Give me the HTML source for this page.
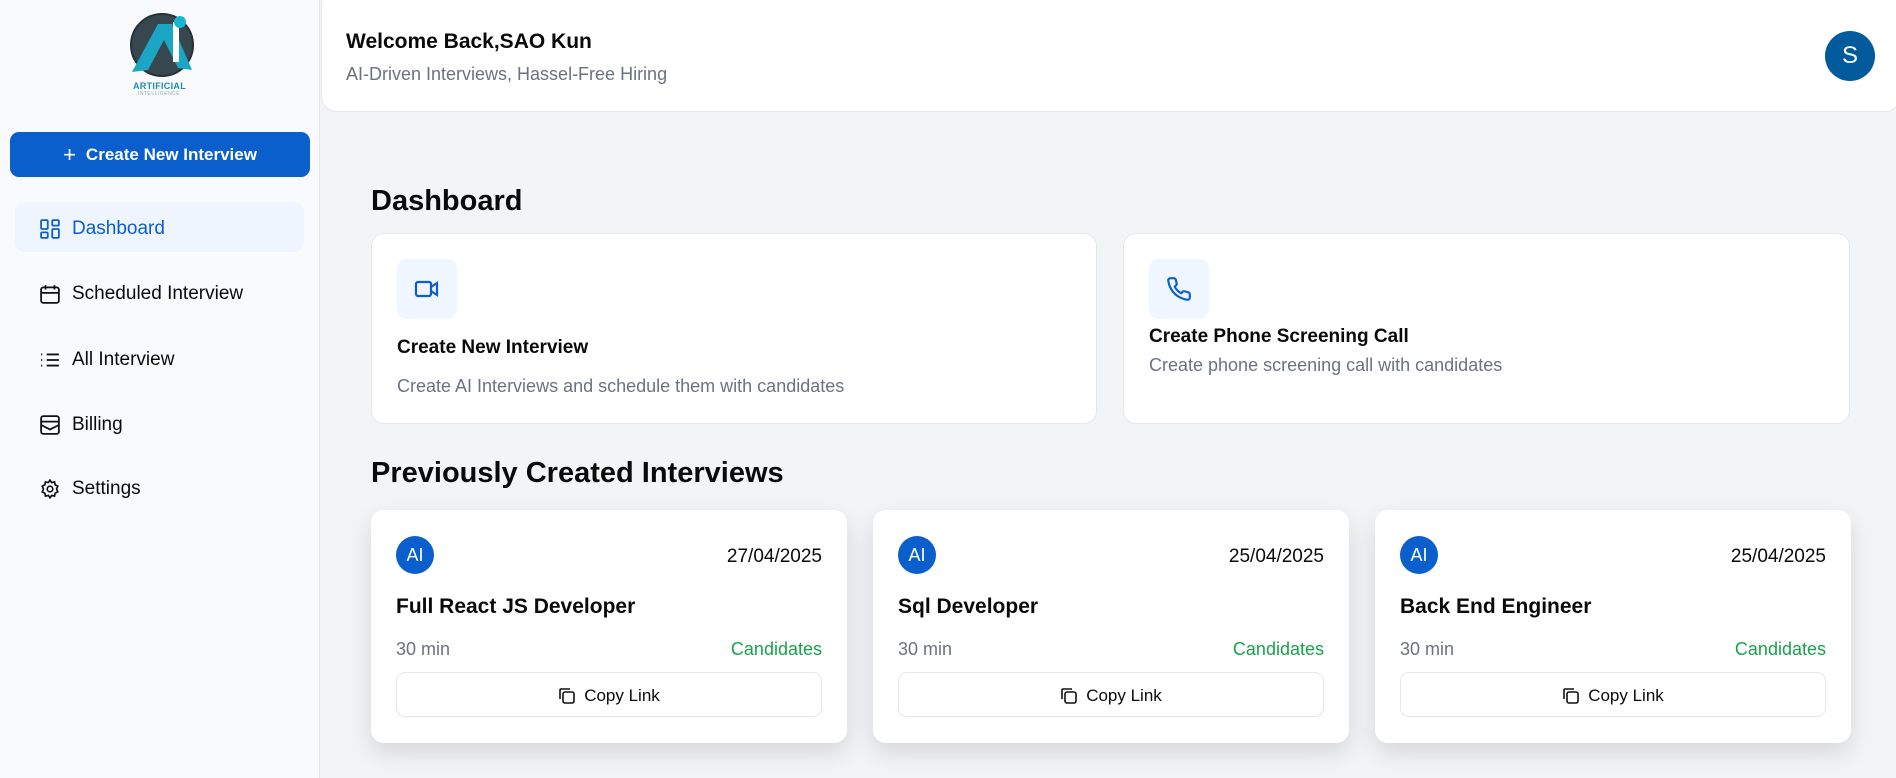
<!DOCTYPE html>
<html><head><meta charset="utf-8"><style>
*{box-sizing:border-box;margin:0;padding:0}
body{width:1896px;height:778px;overflow:hidden;background:#f3f4f6;font-family:"Liberation Sans",sans-serif;position:relative;color:#0a0a0a}
.sb{position:absolute;left:0;top:0;width:320px;height:778px;background:#f8fafc;border-right:1px solid #e5e7eb}
.abs{position:absolute}
.btn{left:10px;top:132px;width:300px;height:45px;background:#0a5fcc;border-radius:9px;color:#fff;font-size:17px;font-weight:bold;display:flex;align-items:center;justify-content:center;gap:10px}
.nav{left:15px;width:289px;height:50px;border-radius:10px;display:flex;align-items:center;padding-left:25px;font-size:19px;gap:12px;font-weight:500;padding-top:3px}
.nav svg{width:20px;height:20px}
.card{position:absolute;background:#fff;border:1px solid #e5e7eb;border-radius:13px}
.ic{position:absolute;width:60px;height:60px;background:#eff6ff;border-radius:10px;display:flex;align-items:center;justify-content:center}
.ct{position:absolute;font-size:19px;font-weight:bold}
.cd{position:absolute;font-size:18px;color:#6b7280}
.ivc{position:absolute;top:510px;width:476px;height:233px;background:#fff;border-radius:13px;box-shadow:0 10px 25px rgba(0,0,0,.12)}
.av{position:absolute;left:25px;top:26px;width:38px;height:38px;border-radius:50%;background:#0a5fcc;color:#fff;font-size:18px;display:flex;align-items:center;justify-content:center}
.dt{position:absolute;right:25px;top:36px;font-size:19px}
.tt{position:absolute;left:25px;top:85px;font-size:21px;font-weight:bold}
.mn{position:absolute;left:25px;top:129px;font-size:18px;color:#6b7280}
.cn{position:absolute;right:25px;top:129px;font-size:18px;color:#16a34a}
.cl{position:absolute;left:25px;top:162px;width:426px;height:45px;border:1px solid #e5e7eb;border-radius:9px;display:flex;align-items:center;justify-content:center;gap:8px;font-size:17px;font-weight:500;padding-top:2px}
</style></head><body>
<div class="sb">
 <svg class="abs" style="left:128px;top:12px" width="70" height="72" viewBox="0 0 70 72">
  <circle cx="34" cy="33" r="31" fill="#37474f"/>
  <circle cx="34" cy="33" r="31" fill="none" stroke="#263238" stroke-width="2"/>
  <path d="M4 60 L30 12 L44 12 L64 58 L50 56 L36 28 L20 58 Z" fill="#1aa6c4"/>
  <rect x="45" y="10" width="6" height="40" fill="#fff"/>
  <circle cx="52" cy="10" r="6" fill="#1ab5d2"/>
 </svg>
 <div class="abs" style="left:133px;top:81px;font-size:9px;font-weight:bold;color:#1c8fb0;letter-spacing:.3px">ARTIFICIAL</div>
 <div class="abs" style="left:138px;top:91px;font-size:5px;color:#9aa;letter-spacing:.5px">INTELLIGENCE</div>
 <div class="abs btn"><span style="font-size:22px;font-weight:normal">+</span>Create New Interview</div>
 <div class="abs nav" style="top:202px;background:#eef5ff;color:#0a5fcc"><svg viewBox="0 0 18 18" fill="none" stroke="#0a5fcc" stroke-width="1.6"><rect x="1" y="1" width="6" height="8" rx="1"/><rect x="11" y="1" width="6" height="5" rx="1"/><rect x="11" y="9" width="6" height="8" rx="1"/><rect x="1" y="12" width="6" height="5" rx="1"/></svg>Dashboard</div>
 <div class="abs nav" style="top:267px"><svg viewBox="0 0 18 18" fill="none" stroke="#111" stroke-width="1.6"><rect x="1" y="3" width="16" height="14" rx="2"/><path d="M1 8h16M5 1v4M13 1v4"/></svg>Scheduled Interview</div>
 <div class="abs nav" style="top:333px"><svg viewBox="0 0 18 18" fill="none" stroke="#111" stroke-width="1.6"><path d="M6 4h11M6 9h11M6 14h11M1 4h1M1 9h1M1 14h1"/></svg>All Interview</div>
 <div class="abs nav" style="top:398px"><svg viewBox="0 0 18 18" fill="none" stroke="#111" stroke-width="1.6"><rect x="1" y="1" width="16" height="16" rx="2"/><path d="M1 6h16M1 9l8 4 8-4"/></svg>Billing</div>
 <div class="abs nav" style="top:462px"><svg viewBox="0 0 18 18" fill="none" stroke="#111" stroke-width="1.5"><circle cx="9" cy="9" r="2.5"/><path d="M9 1l1.5 2.2 2.6-.6.5 2.6 2.4 1.2-1.1 2.6 1.1 2.6-2.4 1.2-.5 2.6-2.6-.6L9 17l-1.5-2.2-2.6.6-.5-2.6-2.4-1.2L3.1 9 2 6.4l2.4-1.2.5-2.6 2.6.6z"/></svg>Settings</div>
</div>
<div class="card" style="left:321px;top:-12px;width:1580px;height:124px;border-radius:16px"></div>
<div class="abs" style="left:346px;top:30px;font-size:21px;font-weight:bold">Welcome Back,SAO Kun</div>
<div class="abs" style="left:346px;top:64px;font-size:18px;color:#6b7280">AI-Driven Interviews, Hassel-Free Hiring</div>
<div class="abs" style="left:1825px;top:31px;width:50px;height:50px;border-radius:50%;background:#005a9c;color:#fff;font-size:24px;display:flex;align-items:center;justify-content:center">S</div>
<div class="abs" style="left:371px;top:185px;font-size:29px;font-weight:bold">Dashboard</div>
<div class="card" style="left:371px;top:233px;width:726px;height:191px"></div>
<div class="ic" style="left:397px;top:259px"><svg width="26" height="20" viewBox="0 0 26 20" fill="none" stroke="#0a5fcc" stroke-width="2.2"><rect x="2" y="3" width="15" height="14" rx="2"/><path d="M17 8l6-4v12l-6-4"/></svg></div>
<div class="ct" style="left:397px;top:337px">Create New Interview</div>
<div class="cd" style="left:397px;top:376px">Create AI Interviews and schedule them with candidates</div>
<div class="card" style="left:1123px;top:233px;width:727px;height:191px"></div>
<div class="ic" style="left:1149px;top:259px"><svg width="26" height="26" viewBox="0 0 24 24" fill="none" stroke="#0a5fcc" stroke-width="2" stroke-linejoin="round"><path d="M22 16.9v3a2 2 0 0 1-2.2 2 19.8 19.8 0 0 1-8.6-3.1 19.5 19.5 0 0 1-6-6A19.8 19.8 0 0 1 2.1 4.2 2 2 0 0 1 4.1 2h3a2 2 0 0 1 2 1.7c.1 1 .4 1.9.7 2.8a2 2 0 0 1-.5 2.1L8 9.9a16 16 0 0 0 6 6l1.3-1.3a2 2 0 0 1 2.1-.4c.9.3 1.8.6 2.8.7a2 2 0 0 1 1.7 2z"/></svg></div>
<div class="ct" style="left:1149px;top:326px">Create Phone Screening Call</div>
<div class="cd" style="left:1149px;top:355px">Create phone screening call with candidates</div>
<div class="abs" style="left:371px;top:457px;font-size:29px;font-weight:bold">Previously Created Interviews</div>

<div class="ivc" style="left:371px"><div class="av">AI</div><div class="dt">27/04/2025</div><div class="tt">Full React JS Developer</div><div class="mn">30 min</div><div class="cn">Candidates</div><div class="cl"><svg width="18" height="18" viewBox="0 0 18 18" fill="none" stroke="#111" stroke-width="1.6"><rect x="5" y="5" width="11" height="11" rx="2"/><path d="M2 12V3a1 1 0 0 1 1-1h9"/></svg>Copy Link</div></div>
<div class="ivc" style="left:873px"><div class="av">AI</div><div class="dt">25/04/2025</div><div class="tt">Sql Developer</div><div class="mn">30 min</div><div class="cn">Candidates</div><div class="cl"><svg width="18" height="18" viewBox="0 0 18 18" fill="none" stroke="#111" stroke-width="1.6"><rect x="5" y="5" width="11" height="11" rx="2"/><path d="M2 12V3a1 1 0 0 1 1-1h9"/></svg>Copy Link</div></div>
<div class="ivc" style="left:1375px"><div class="av">AI</div><div class="dt">25/04/2025</div><div class="tt">Back End Engineer</div><div class="mn">30 min</div><div class="cn">Candidates</div><div class="cl"><svg width="18" height="18" viewBox="0 0 18 18" fill="none" stroke="#111" stroke-width="1.6"><rect x="5" y="5" width="11" height="11" rx="2"/><path d="M2 12V3a1 1 0 0 1 1-1h9"/></svg>Copy Link</div></div>
</body></html>
